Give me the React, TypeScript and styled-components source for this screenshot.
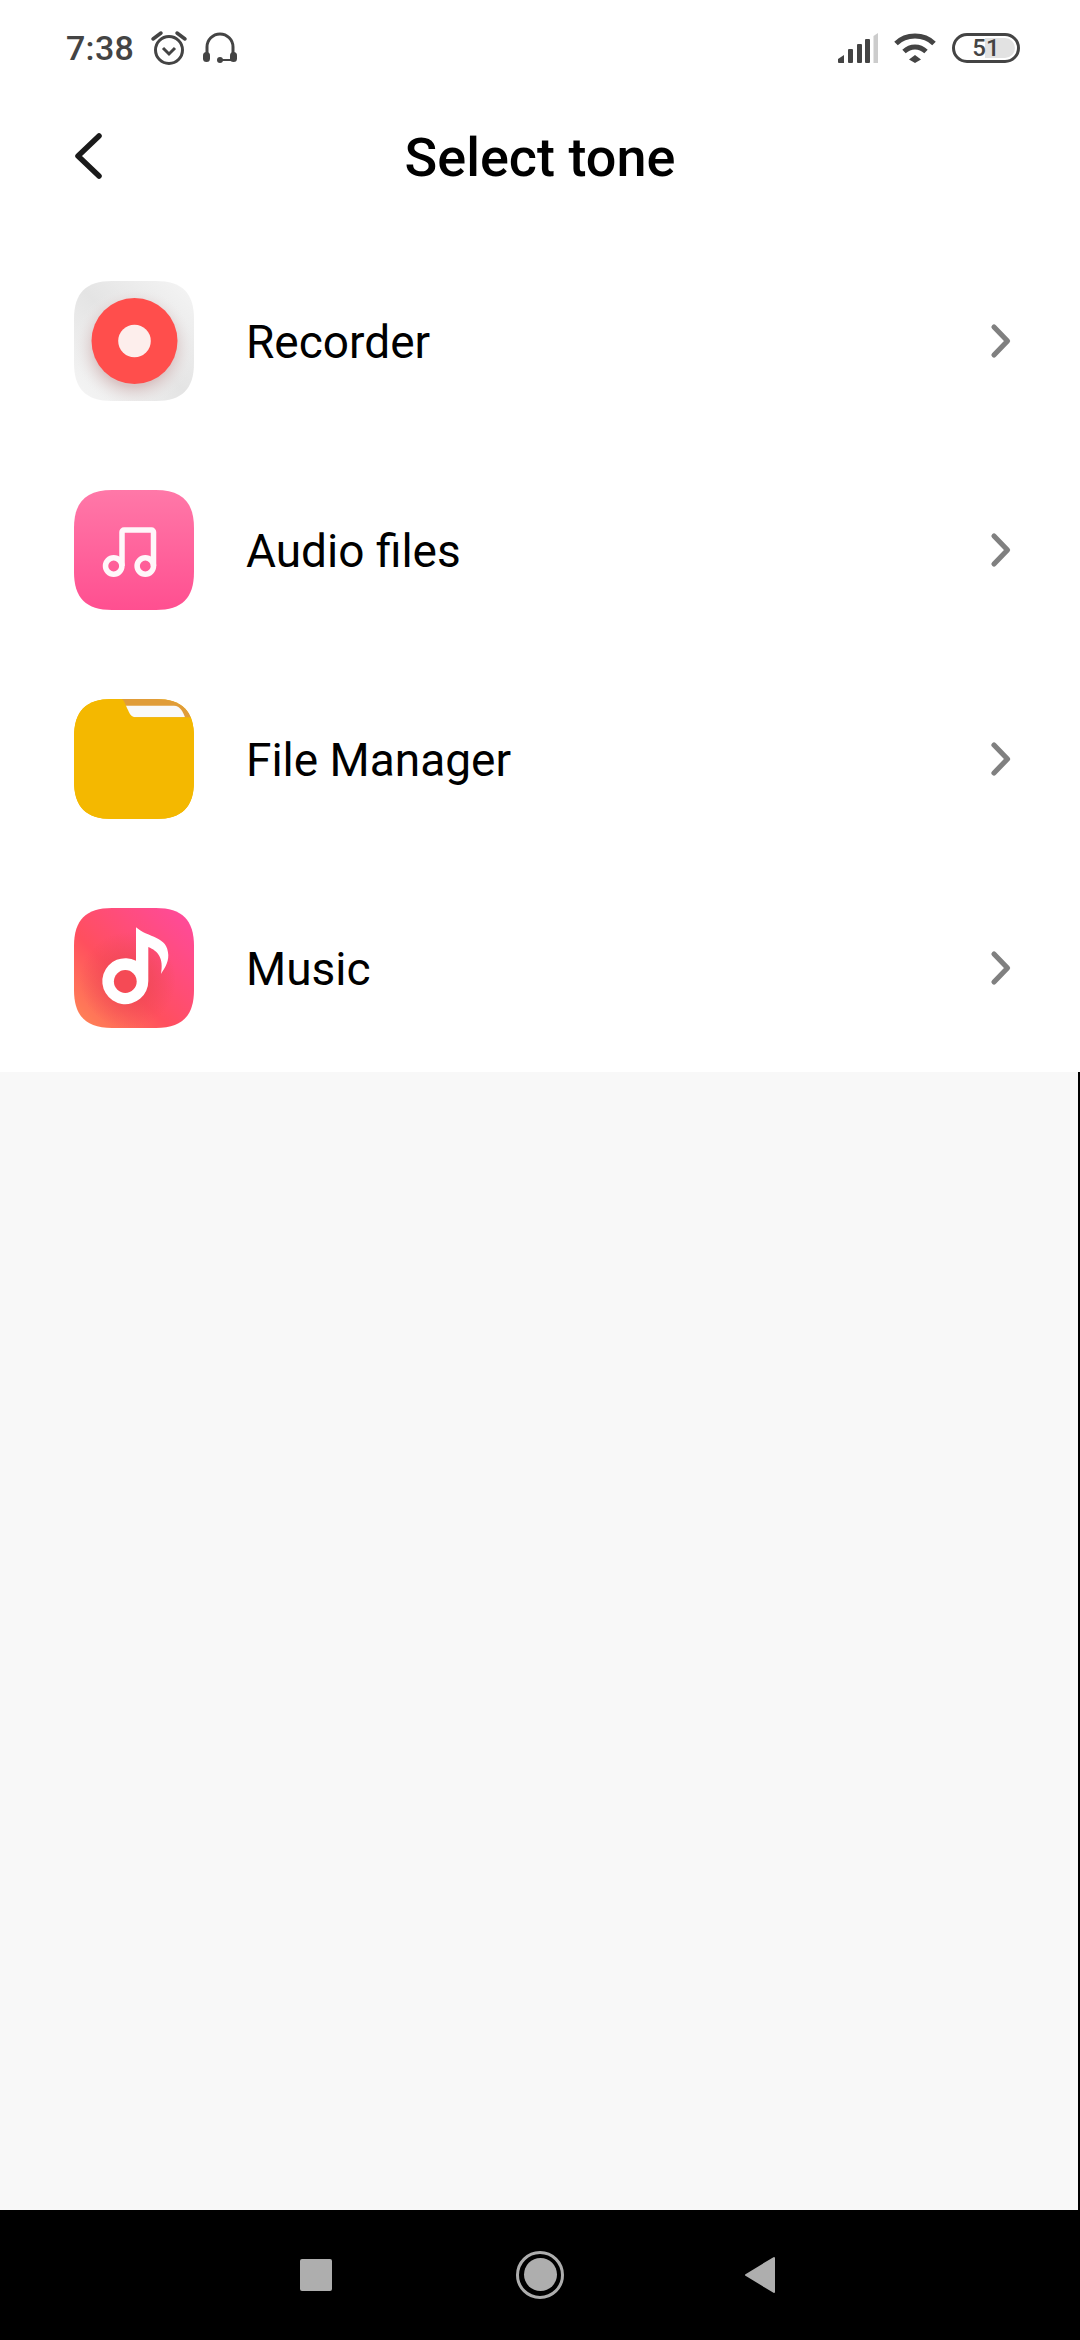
import React from 'react';
import styled, { createGlobalStyle } from 'styled-components';

const Global = createGlobalStyle`
  html, body {
    margin: 0;
    padding: 0;
    background: #f8f8f8;
  }
  * {
    box-sizing: border-box;
  }
`;

const Page = styled.div`
  width: 1080px;
  height: 2340px;
  display: flex;
  flex-direction: column;
  font-family: Roboto, "Liberation Sans", sans-serif;
  overflow: hidden;
`;
const Top = styled.div`
  background: #fff;
  height: 1072px;
  flex-shrink: 0;
`;
const StatusBar = styled.div`
  height: 96px;
  padding: 0 60px 0 66px;
  display: flex;
  justify-content: space-between;
  align-items: center;
  color: #444;
`;
const StatusGroup = styled.div`
  display: flex;
  align-items: center;
`;
const Clock = styled.span`
  font-size: 34px;
  font-weight: 500;
  letter-spacing: 0.3px;
  margin-right: 16px;
`;
const Header = styled.div`
  height: 120px;
  display: grid;
  grid-template-columns: 1fr auto 1fr;
  align-items: center;
`;
const Back = styled.svg`
  margin-left: 70px;
`;
const Title = styled.h1`
  margin: 0;
  padding-top: 3px;
  font-size: 54px;
  font-weight: 500;
  color: #000;
`;
const List = styled.div`
  padding-top: 20px;
`;
const Row = styled.div`
  height: 209px;
  padding: 0 67px 0 74px;
  display: flex;
  align-items: center;
`;
const Label = styled.span`
  flex: 1;
  margin-left: 52px;
  padding-top: 3px;
  font-size: 46px;
  color: #000;
`;
const Rest = styled.div`
  flex: 1;
  position: relative;
  background: #f8f8f8;
`;
const Edge = styled.div`
  position: absolute;
  top: 0;
  right: 0;
  bottom: 0;
  width: 2px;
  background: #000;
`;
const NavBar = styled.div`
  height: 130px;
  background: #000;
  flex-shrink: 0;
  display: flex;
  align-items: center;
  gap: 180px;
  padding: 0 0 1px 300px;
`;

const AlarmIcon = () => (
  <svg width="38" height="36" viewBox="0 0 38 36" fill="none" stroke="#444">
    <circle cx="19" cy="20" r="13.5" strokeWidth="3" />
    <path d="M13 18l6 6 6-6" strokeWidth="3" />
    <path d="M3 9l8-6M35 9l-8-6" strokeWidth="3.5" strokeLinecap="round" />
  </svg>
);

const HeadsetSvg = styled.svg`
  margin-left: 14px;
`;
const HeadsetIcon = () => (
  <HeadsetSvg width="36" height="34" viewBox="0 0 36 34" fill="none">
    <path d="M5 26V16a13 13 0 0 1 26 0v10" stroke="#444" strokeWidth="3" />
    <rect x="1" y="21" width="7" height="10" rx="3.5" fill="#444" />
    <rect x="28" y="21" width="7" height="10" rx="3.5" fill="#444" />
    <circle cx="18" cy="29" r="3" fill="#444" />
    <path d="M18 29h12" stroke="#444" strokeWidth="2" />
  </HeadsetSvg>
);

const SignalIcon = () => (
  <svg width="40" height="30" viewBox="0 0 40 30">
    <path d="M0 26l6-4v8H1a1 1 0 0 1-1-1z" fill="#444" />
    <rect x="10" y="16" width="5" height="14" rx="1" fill="#444" />
    <rect x="19" y="11" width="5" height="19" rx="1" fill="#444" />
    <rect x="27" y="6" width="5" height="24" rx="1" fill="#444" />
    <path d="M35.5 3l4.5-3v30h-4.5z" fill="#ccc" />
  </svg>
);

const WifiSvg = styled.svg`
  margin-left: 16px;
`;
const WifiIcon = () => (
  <WifiSvg width="42" height="30" viewBox="0 0 42 30" fill="none" stroke="#444" strokeWidth="5">
    <path d="M2 10.5C12 0.5 30 0.5 40 10.5" />
    <path d="M10 18.5c6.5-6 15.5-6 22 0" />
    <path d="M21 22l6 4.5-6 3.5-6-3.5z" fill="#444" stroke="none" />
  </WifiSvg>
);

const BatteryWrap = styled.div`
  width: 68px;
  height: 30px;
  margin-left: 16px;
  border: 3px solid #444;
  border-radius: 15px;
  position: relative;
  display: flex;
  align-items: center;
  justify-content: center;
  overflow: hidden;
  font-size: 24px;
  font-weight: 500;
  color: #444;
`;
const BatteryFill = styled.div`
  position: absolute;
  top: 2px;
  bottom: 2px;
  left: 30px;
  right: 2px;
  background: #e2e2e2;
  border-radius: 0 10px 10px 0;
`;
const BatteryText = styled.span`
  position: relative;
  line-height: 1;
`;

const Squircle = styled.svg`
  flex-shrink: 0;
  display: block;
`;

const shape = 'M38 0H82C108 0 120 12 120 38V82C120 108 108 120 82 120H38C12 120 0 108 0 82V38C0 12 12 0 38 0Z';

const RecorderIcon = () => (
  <Squircle width="120" height="120" viewBox="0 0 120 120">
    <defs>
      <linearGradient id="recBg" x1="1" y1="0" x2="0" y2="1">
        <stop offset="0" stopColor="#f5f5f5" />
        <stop offset="0.5" stopColor="#e4e4e4" />
        <stop offset="1" stopColor="#f6f6f6" />
      </linearGradient>
      <radialGradient id="recGlow" cx="0.5" cy="0.5" r="0.5">
        <stop offset="0.65" stopColor="#d8c2c2" stopOpacity="0.9" />
        <stop offset="1" stopColor="#eeeeee" stopOpacity="0" />
      </radialGradient>
      <clipPath id="recClip"><path d={shape} /></clipPath>
    </defs>
    <path d={shape} fill="url(#recBg)" />
    <g clipPath="url(#recClip)">
      <circle cx="60" cy="66" r="60" fill="url(#recGlow)" />
    </g>
    <circle cx="60.5" cy="60" r="43" fill="#ff4e4c" />
    <circle cx="60.5" cy="60" r="16.3" fill="#fdeeec" />
  </Squircle>
);

const AudioIcon = () => (
  <Squircle width="120" height="120" viewBox="0 0 120 120">
    <defs>
      <linearGradient id="audioBg" x1="0" y1="0" x2="0" y2="1">
        <stop offset="0" stopColor="#ff78a8" />
        <stop offset="1" stopColor="#ff4f90" />
      </linearGradient>
    </defs>
    <path d={shape} fill="url(#audioBg)" />
    <g fill="none" stroke="#fff7fa" strokeWidth="5.5">
      <circle cx="39.7" cy="76" r="8.2" />
      <circle cx="71.3" cy="76" r="8.2" />
      <path d="M48 76V42a2 2 0 0 1 2-2H77.5a2 2 0 0 1 2 2V76" strokeLinejoin="round" />
    </g>
  </Squircle>
);

const FilesIcon = () => (
  <Squircle width="120" height="120" viewBox="0 0 120 120">
    <defs>
      <clipPath id="fileClip"><path d={shape} /></clipPath>
    </defs>
    <g clipPath="url(#fileClip)">
      <rect width="120" height="120" fill="#f4b800" />
      <rect x="40" y="0" width="80" height="20" fill="#e09c38" />
      <path d="M50 6.7H100C106 6.7 109 13 111 18.3H54Z" fill="#f9f9f9" />
      <path d="M0 0H47.7C50 1 52 7 54 11C56 16 58 18.3 62 18.3H120V120H0Z" fill="#f4b800" />
    </g>
  </Squircle>
);

const MusicIcon = () => (
  <Squircle width="120" height="120" viewBox="0 0 120 120">
    <defs>
      <linearGradient id="musicBg" x1="1" y1="0" x2="0" y2="1">
        <stop offset="0" stopColor="#ff4aa0" />
        <stop offset="0.6" stopColor="#ff4f5e" />
        <stop offset="1" stopColor="#ff8a55" />
      </linearGradient>
      <radialGradient id="musicShade" cx="0.45" cy="0.6" r="0.4">
        <stop offset="0" stopColor="#e8454f" stopOpacity="0.9" />
        <stop offset="1" stopColor="#e8454f" stopOpacity="0" />
      </radialGradient>
    </defs>
    <path d={shape} fill="url(#musicBg)" />
    <path d={shape} fill="url(#musicShade)" />
    <path d="M62 19.3C74 30 94 28 94.3 47C94.5 55 90 61 87 66C90 50 84 43 74.3 39V73A23 23 0 1 1 62 52.8Z" fill="#fff" />
    <circle cx="51.3" cy="73.5" r="11.4" fill="#f54a55" />
  </Squircle>
);

const Chevron = () => (
  <svg width="24" height="38" viewBox="0 0 24 38" fill="none">
    <path d="M5 5L18.5 19L5 33" stroke="#808080" strokeWidth="5.2" strokeLinecap="round" strokeLinejoin="round" />
  </svg>
);

const Square = styled.div`
  width: 32px;
  height: 32px;
  border-radius: 2px;
  background: #aeaeae;
`;
const HomeRing = styled.div`
  width: 48px;
  height: 48px;
  margin-left: 4px;
  border: 3px solid #aeaeae;
  border-radius: 50%;
  display: flex;
  align-items: center;
  justify-content: center;
`;
const HomeDot = styled.div`
  width: 33px;
  height: 33px;
  border-radius: 50%;
  background: #aeaeae;
`;

const rows = [
  { label: 'Recorder', icon: <RecorderIcon /> },
  { label: 'Audio files', icon: <AudioIcon /> },
  { label: 'File Manager', icon: <FilesIcon /> },
  { label: 'Music', icon: <MusicIcon /> },
];

export default function App() {
  return (
    <Page>
      <Global />
      <Top>
        <StatusBar>
          <StatusGroup>
            <Clock>7:38</Clock>
            <AlarmIcon />
            <HeadsetIcon />
          </StatusGroup>
          <StatusGroup>
            <SignalIcon />
            <WifiIcon />
            <BatteryWrap>
              <BatteryFill />
              <BatteryText>51</BatteryText>
            </BatteryWrap>
          </StatusGroup>
        </StatusBar>
        <Header>
          <Back width="40" height="56" viewBox="0 0 40 56" fill="none">
            <path d="M29 8L8 28l21 20" stroke="#1a1a1a" strokeWidth="5.5" strokeLinecap="round" strokeLinejoin="round" />
          </Back>
          <Title>Select tone</Title>
        </Header>
        <List>
          {rows.map(row => (
            <Row key={row.label}>
              {row.icon}
              <Label>{row.label}</Label>
              <Chevron />
            </Row>
          ))}
        </List>
      </Top>
      <Rest>
        <Edge />
      </Rest>
      <NavBar>
        <Square />
        <HomeRing>
          <HomeDot />
        </HomeRing>
        <svg width="34" height="38" viewBox="0 0 34 38">
          <path d="M30 2V36L2 19Z" fill="#aeaeae" stroke="#aeaeae" strokeWidth="2" strokeLinejoin="round" />
        </svg>
      </NavBar>
    </Page>
  );
}
